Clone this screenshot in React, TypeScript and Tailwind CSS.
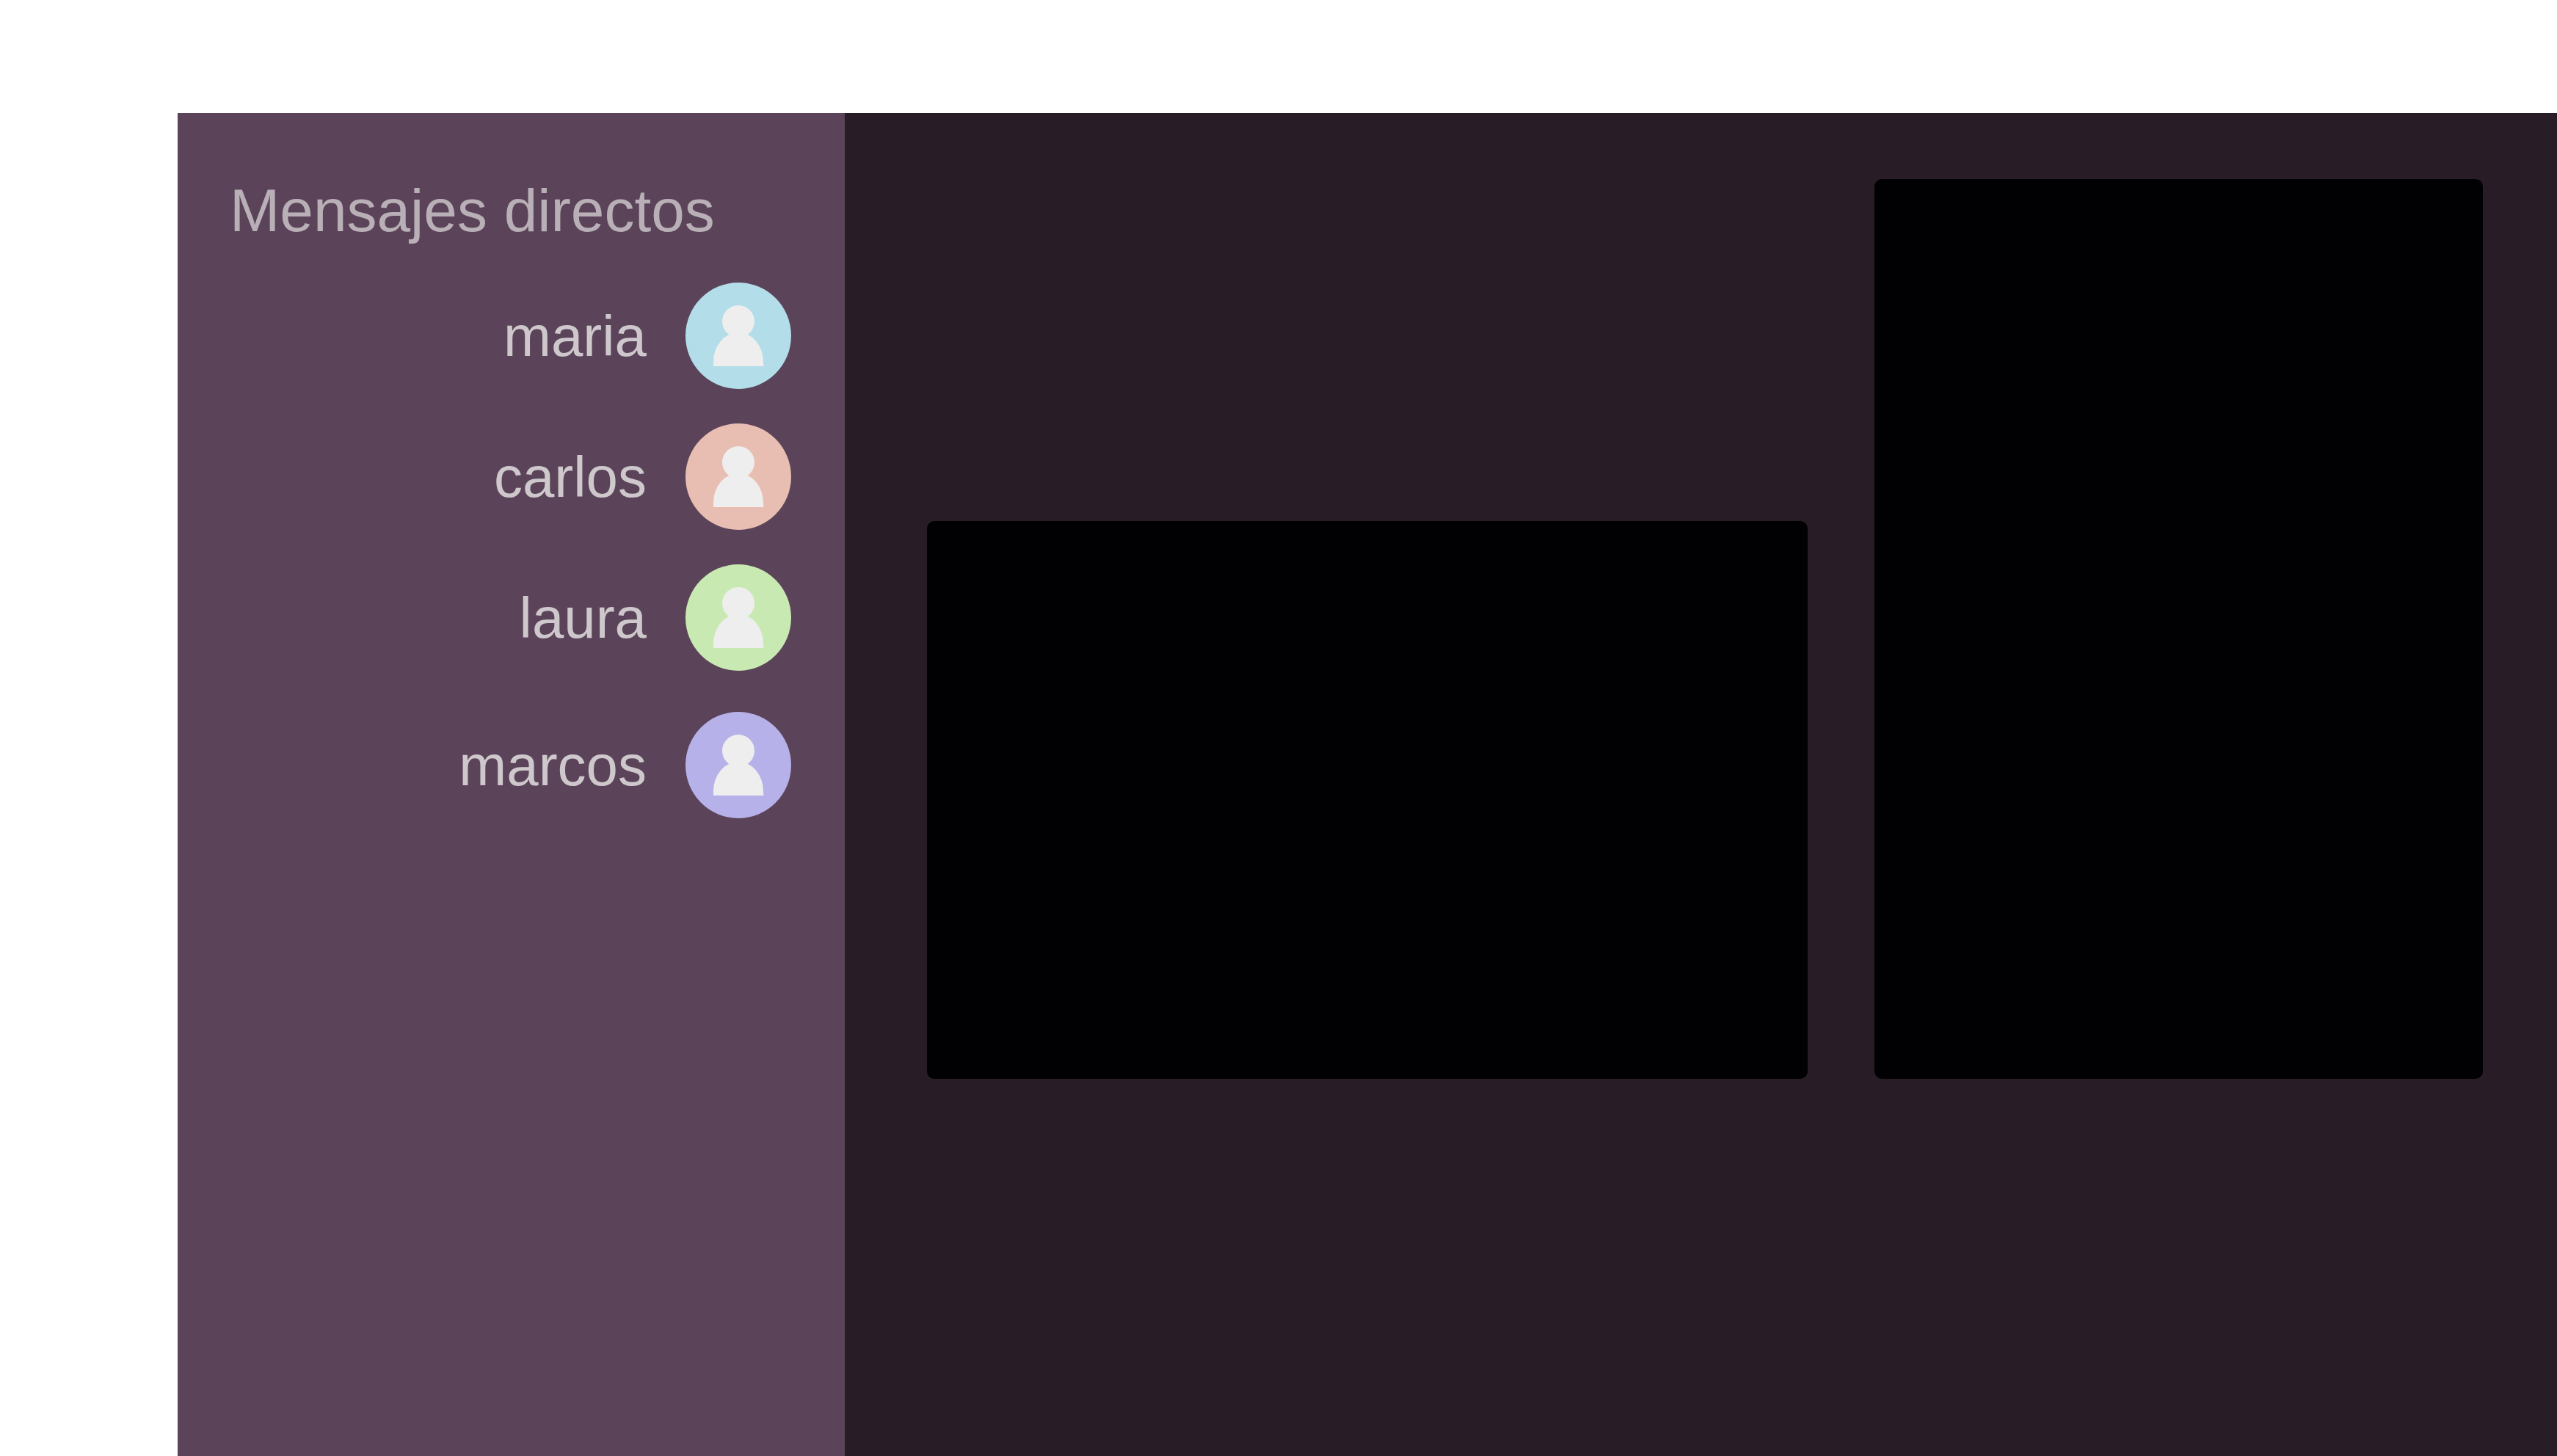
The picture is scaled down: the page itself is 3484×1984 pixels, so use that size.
type Contact = { name: string; avatar: string; row: string };

const contacts: Contact[] = [
  { name: "maria", avatar: "text-[#b3dde8]", row: "" },
  { name: "carlos", avatar: "text-[#e8beb3]", row: "mt-[47px]" },
  { name: "laura", avatar: "text-[#c9e9b3]", row: "mt-[47px]" },
  { name: "marcos", avatar: "text-[#b7b1e9]", row: "mt-14" },
];

function Avatar({ color }: { color: string }) {
  return (
    <svg viewBox="0 0 144 145" className={`h-[145px] w-36 shrink-0 ${color}`} aria-hidden="true">
      <ellipse cx="72" cy="72.5" rx="72" ry="72.5" fill="currentColor" />
      <circle cx="72" cy="53" r="22" fill="#eeeeee" />
      <path d="M38 114V108A34 40 0 0 1 106 108L106.3 114Z" fill="#eeeeee" />
    </svg>
  );
}

function Sidebar() {
  return (
    <aside className="w-[909px] shrink-0 bg-[#5b4459] pt-[85px] pr-[73px] pl-[71px]">
      <h2 className="text-[82px] leading-[96px] whitespace-nowrap text-[#b9afb7]">Mensajes directos</h2>
      <ul className="mt-[50px]">
        {contacts.map((contact) => (
          <li key={contact.name} className={contact.row}>
            <a href={`#${contact.name}`} className="flex items-center justify-end gap-[53px]">
              <span className="text-[78px] leading-[96px] text-[#cec8cd]">{contact.name}</span>
              <Avatar color={contact.avatar} />
            </a>
          </li>
        ))}
      </ul>
    </aside>
  );
}

export default function App() {
  return (
    <div className="flex min-h-screen flex-col bg-white pt-[154px] pl-[242px] font-['Liberation_Sans',Arial,sans-serif]">
      <div className="flex grow">
        <Sidebar />
        <main className="flex min-w-0 flex-1 items-start bg-[#281d26] pt-[90px] pr-[101px] pl-28">
          <div className="flex w-full items-end gap-[91px]">
            <section className="aspect-[1200/760] min-w-0 flex-[1200] rounded-[10px] bg-[#010002]" aria-label="Video principal" />
            <section className="aspect-[829/1226] min-w-0 flex-[829] rounded-[10px] bg-[#010002]" aria-label="Panel lateral" />
          </div>
        </main>
      </div>
    </div>
  );
}
